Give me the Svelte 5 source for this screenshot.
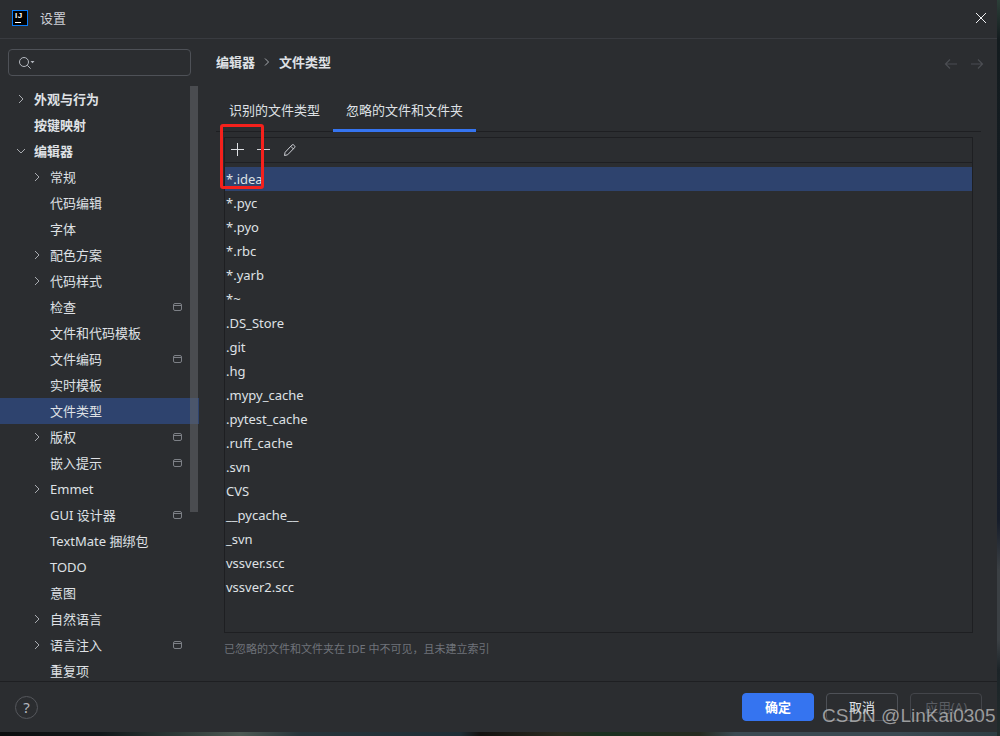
<script>
	const tree = [
		{ label: '外观与行为', level: 0, arrow: 'right', bold: true },
		{ label: '按键映射', level: 0, bold: true },
		{ label: '编辑器', level: 0, arrow: 'down', bold: true },
		{ label: '常规', level: 1, arrow: 'right' },
		{ label: '代码编辑', level: 1 },
		{ label: '字体', level: 1 },
		{ label: '配色方案', level: 1, arrow: 'right' },
		{ label: '代码样式', level: 1, arrow: 'right' },
		{ label: '检查', level: 1, badge: true },
		{ label: '文件和代码模板', level: 1 },
		{ label: '文件编码', level: 1, badge: true },
		{ label: '实时模板', level: 1 },
		{ label: '文件类型', level: 1, selected: true },
		{ label: '版权', level: 1, arrow: 'right', badge: true },
		{ label: '嵌入提示', level: 1, badge: true },
		{ label: 'Emmet', level: 1, arrow: 'right' },
		{ label: 'GUI 设计器', level: 1, badge: true },
		{ label: 'TextMate 捆绑包', level: 1 },
		{ label: 'TODO', level: 1 },
		{ label: '意图', level: 1 },
		{ label: '自然语言', level: 1, arrow: 'right' },
		{ label: '语言注入', level: 1, arrow: 'right', badge: true },
		{ label: '重复项', level: 1 }
	];

	const patterns = [
		'*.idea', '*.pyc', '*.pyo', '*.rbc', '*.yarb', '*~', '.DS_Store', '.git', '.hg',
		'.mypy_cache', '.pytest_cache', '.ruff_cache', '.svn', 'CVS', '__pycache__', '_svn',
		'vssver.scc', 'vssver2.scc'
	];
</script>

<div class="backdrop">
	<div class="dialog">
		<header class="titlebar">
			<div class="logo">
				<span>IJ</span>
				<i></i>
			</div>
			<span class="title">设置</span>
			<svg class="close" width="12" height="12" viewBox="0 0 12 12">
				<path d="M1 1l10 10M11 1L1 11" stroke="#f0f1f3" stroke-width="1" fill="none" />
			</svg>
		</header>

		<div class="body">
			<aside class="sidebar">
				<div class="search">
					<svg width="18" height="14" viewBox="0 0 18 14" fill="none">
						<circle cx="6" cy="6" r="4.5" stroke="#b4b8bf" />
						<path d="M9.3 9.3l3.4 3.4" stroke="#b4b8bf" />
						<path d="M12.5 5h4l-2 2.2z" fill="#b4b8bf" />
					</svg>
				</div>
				<div class="tree-wrap">
					<ul class="tree">
						{#each tree as item}
							<li class="row" class:selected={item.selected} class:nested={item.level === 1}>
								<span class="arrow">
									{#if item.arrow === 'right'}
										<svg width="10" height="10" viewBox="0 0 10 10" fill="none">
											<path d="M3 1l4 4-4 4" stroke="#a8abb0" />
										</svg>
									{:else if item.arrow === 'down'}
										<svg width="10" height="10" viewBox="0 0 10 10" fill="none">
											<path d="M1 3l4 4 4-4" stroke="#a8abb0" />
										</svg>
									{/if}
								</span>
								<span class="label" class:bold={item.bold}>{item.label}</span>
								{#if item.badge}
									<svg class="badge" width="10" height="10" viewBox="0 0 10 10" fill="none">
										<rect x="0.5" y="1.5" width="8" height="7" rx="1.5" stroke="#7d8086" />
										<path d="M1 3.5h7" stroke="#7d8086" />
									</svg>
								{/if}
							</li>
						{/each}
					</ul>
					<div class="scrollbar"></div>
				</div>
			</aside>

			<main class="content">
				<div class="crumbs">
					<span>编辑器</span>
					<svg width="8" height="10" viewBox="0 0 8 10" fill="none">
						<path d="M2 1.5L5.5 5 2 8.5" stroke="#a8abb0" />
					</svg>
					<span>文件类型</span>
					<div class="nav">
						<svg width="14" height="12" viewBox="0 0 14 12" fill="none">
							<path d="M13 6H1.5M6 1.5L1.5 6 6 10.5" stroke="#4b4d52" stroke-width="1.2" />
						</svg>
						<svg width="14" height="12" viewBox="0 0 14 12" fill="none">
							<path d="M1 6h11.5M8 1.5L12.5 6 8 10.5" stroke="#4b4d52" stroke-width="1.2" />
						</svg>
					</div>
				</div>

				<nav class="tabs">
					<span class="tab">识别的文件类型</span>
					<span class="tab active">忽略的文件和文件夹</span>
				</nav>

				<section class="panel">
					<div class="toolbar">
						<svg width="14" height="14" viewBox="0 0 14 14" fill="none">
							<path d="M6.5 0v13M0 6.5h13" stroke="#dfe1e5" />
						</svg>
						<svg width="14" height="14" viewBox="0 0 14 14" fill="none">
							<path d="M0 6.5h13" stroke="#ced0d6" />
						</svg>
						<svg width="14" height="14" viewBox="0 0 14 14" fill="none">
							<path
								d="M1.5 12.5l.6-3.2 6.8-7.2a1.4 1.4 0 0 1 2 0l.6.6a1.4 1.4 0 0 1 0 2l-6.9 7.1zM7.8 3.3l2.8 2.8"
								stroke="#ced0d6"
							/>
						</svg>
					</div>
					<ul class="list">
						{#each patterns as p, i}
							<li class:selected={i === 0}>{p}</li>
						{/each}
					</ul>
				</section>
				<p class="hint">已忽略的文件和文件夹在 IDE 中不可见，且未建立索引</p>
				<div class="marker"></div>
			</main>
		</div>

		<footer class="footer">
			<span class="help">?</span>
			<div class="buttons">
				<button class="primary">确定</button>
				<button>取消</button>
				<button class="disabled">应用(A)</button>
			</div>
		</footer>
		<span class="watermark">CSDN @LinKai0305</span>
	</div>
</div>

<style>
	:global(body) {
		margin: 0;
		background: #15191a;
	}

	ul {
		list-style: none;
		margin: 0;
		padding: 0;
	}

	.backdrop {
		width: 1000px;
		height: 736px;
		overflow: hidden;
		position: relative;
		background:
			linear-gradient(180deg, #2c3f38 0, #141c1f 40px, #121a22 300px, #161d2a 520px, #3b4044 570px, #3b4044 640px, #1c2428 670px, #222c2c 100%) right top / 3px 100% no-repeat,
			linear-gradient(90deg, #0b0d0e 0, #12181a 100px, #2e3a38 180px, #4e5a54 240px, #27343a 300px, #1f2e36 460px, #141210 480px, #2a2a20 560px, #1a3020 600px, #262a20 700px, #3b4a52 735px, #3b4a52 900px, #2d3c42 100%);
		font-family: 'Noto Sans', 'Noto Sans CJK SC', sans-serif;
		font-size: 13px;
		color: #dfe1e5;
	}

	.dialog {
		width: 997px;
		height: 732px;
		background: #2b2d30;
		display: flex;
		flex-direction: column;
		position: relative;
	}

	.titlebar {
		height: 39px;
		box-sizing: border-box;
		border-bottom: 1px solid #393b40;
		display: flex;
		align-items: center;
		padding: 0 10px 3px 12px;
	}

	.logo {
		width: 16px;
		height: 16px;
		box-sizing: border-box;
		background: #000;
		border: 1px solid #087cfa;
		position: relative;
		color: #fff;
		font-family: 'Liberation Sans', sans-serif;
		font-size: 8px;
		font-weight: bold;
		line-height: 9px;
		padding-left: 2px;
		letter-spacing: 0.5px;
	}

	.logo i {
		position: absolute;
		left: 2px;
		bottom: 2px;
		width: 6px;
		height: 1px;
		background: #fff;
	}

	.title {
		margin-left: 12px;
		color: #ced0d6;
	}

	.close {
		margin-left: auto;
	}

	.body {
		flex: 1;
		display: flex;
		min-height: 0;
	}

	.sidebar {
		width: 199px;
		display: flex;
		flex-direction: column;
		flex-shrink: 0;
	}

	.search {
		margin: 10px 8px 0;
		height: 27px;
		box-sizing: border-box;
		border: 1px solid #4e5157;
		border-radius: 4px;
		display: flex;
		align-items: center;
		padding-left: 9px;
	}

	.tree-wrap {
		margin-top: 10px;
		flex: 1;
		min-height: 0;
		overflow: hidden;
		position: relative;
	}

	.row {
		height: 26px;
		line-height: 26px;
		display: flex;
		align-items: center;
		padding-left: 16px;
		padding-right: 16px;
	}

	.row.nested {
		padding-left: 32px;
	}

	.row.selected {
		background: #2e436e;
	}

	.arrow {
		width: 18px;
		flex-shrink: 0;
		display: flex;
	}

	.label {
		color: #dfe1e5;
		white-space: nowrap;
	}

	.label.bold {
		font-weight: 700;
	}

	.badge {
		margin-left: auto;
	}

	.scrollbar {
		position: absolute;
		left: 190px;
		top: 0;
		width: 8px;
		height: 426px;
		background: rgba(100, 102, 108, 0.55);
	}

	.content {
		flex: 1;
		min-width: 0;
		padding-left: 17px;
		padding-right: 17px;
		position: relative;
		display: flex;
		flex-direction: column;
	}

	.crumbs {
		height: 45px;
		display: flex;
		align-items: center;
		gap: 8px;
		font-weight: 700;
	}

	.nav {
		margin-left: auto;
		display: flex;
		gap: 12px;
		margin-right: -4px;
		padding-top: 4px;
	}

	.tabs {
		height: 48px;
		margin-right: -1px;
		box-sizing: border-box;
		border-bottom: 1px solid #1e1f22;
		display: flex;
	}

	.tab {
		padding: 16px 13px 0;
		color: #dfe1e5;
		position: relative;
	}

	.tab.active::after {
		content: '';
		position: absolute;
		left: 0;
		right: 0;
		bottom: -1px;
		height: 3px;
		background: #3574f0;
	}

	.panel {
		margin: 5px 7px 0 8px;
		height: 496px;
		box-sizing: border-box;
		border: 1px solid #1e1f22;
		display: flex;
		flex-direction: column;
	}

	.toolbar {
		height: 25px;
		flex-shrink: 0;
		box-sizing: border-box;
		border-bottom: 1px solid #1e1f22;
		display: flex;
		align-items: center;
		gap: 12px;
		padding-left: 6px;
	}

	.list {
		padding-top: 4px;
	}

	.list li {
		height: 24px;
		line-height: 24px;
		padding-left: 1px;
		color: #dfe1e5;
	}

	.list li.selected {
		background: #2e436e;
	}

	.hint {
		margin: 8px 0 0 8px;
		font-size: 11px;
		line-height: 16px;
		color: #6f737a;
	}

	.marker {
		position: absolute;
		left: 21px;
		top: 85px;
		width: 44px;
		height: 65px;
		box-sizing: border-box;
		border: 3px solid #f5211c;
		border-radius: 3px;
	}

	.footer {
		height: 51px;
		box-sizing: border-box;
		border-top: 1px solid #1e1f22;
		display: flex;
		align-items: center;
		padding: 0 15px;
	}

	.help {
		width: 23px;
		height: 23px;
		box-sizing: border-box;
		border: 1px solid #55575c;
		border-radius: 50%;
		display: flex;
		align-items: center;
		justify-content: center;
		color: #b4b8bf;
		font-size: 15px;
	}

	.buttons {
		margin-left: auto;
		display: flex;
		gap: 12px;
	}

	button {
		width: 72px;
		height: 28px;
		border: 1px solid #4e5157;
		border-radius: 4px;
		background: transparent;
		color: #dfe1e5;
		font: inherit;
		padding: 0 0 2px;
	}

	button.primary {
		background: #3574f0;
		border-color: #3574f0;
		color: #fff;
		font-weight: 700;
	}

	button.disabled {
		border-color: #43454a;
		color: #5a5d63;
	}

	.watermark {
		position: absolute;
		left: 822px;
		top: 705px;
		font-family: 'Liberation Sans', sans-serif;
		font-size: 19px;
		color: rgba(200, 200, 200, 0.72);
		white-space: nowrap;
	}
</style>
